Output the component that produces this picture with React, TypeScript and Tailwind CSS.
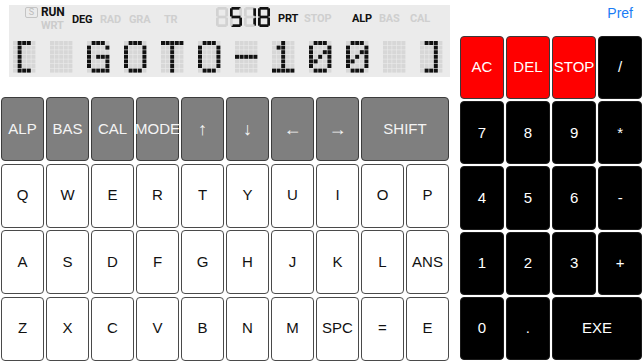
import React from 'react';

// 5x7 dot-matrix glyphs for the LCD line
const GLYPHS: Record<string, string[]> = {
  '[': ['01110', '01000', '01000', '01000', '01000', '01000', '01110'],
  ']': ['01110', '00010', '00010', '00010', '00010', '00010', '01110'],
  G: ['01110', '10001', '10000', '10111', '10001', '10001', '01111'],
  O: ['01110', '10001', '10001', '10001', '10001', '10001', '01110'],
  T: ['11111', '00100', '00100', '00100', '00100', '00100', '00100'],
  '-': ['00000', '00000', '00000', '11111', '00000', '00000', '00000'],
  '1': ['00100', '01100', '00100', '00100', '00100', '00100', '11111'],
  '0': ['01110', '10001', '10011', '10101', '11001', '10001', '01110'],
  ' ': ['00000', '00000', '00000', '00000', '00000', '00000', '00000'],
};

const LCD_TEXT = '[ GOTO-100 ]';

const SEGMENTS: Record<string, { x: number; y: number; w: number; h: number }> = {
  a: { x: 1.5, y: 0, w: 9, h: 2.7 },
  b: { x: 9.3, y: 1.3, w: 2.7, h: 8.1 },
  c: { x: 9.3, y: 10.6, w: 2.7, h: 8.1 },
  d: { x: 1.5, y: 17.3, w: 9, h: 2.7 },
  e: { x: 0, y: 10.6, w: 2.7, h: 8.1 },
  f: { x: 0, y: 1.3, w: 2.7, h: 8.1 },
  g: { x: 1.5, y: 8.65, w: 9, h: 2.7 },
};

const DIGITS = ['', 'afgcd', 'bc', 'abcdefg'];

const fnKeys = ['ALP', 'BAS', 'CAL', 'MODE', '↑', '↓', '←', '→'];
const letterRows = [
  ['Q', 'W', 'E', 'R', 'T', 'Y', 'U', 'I', 'O', 'P'],
  ['A', 'S', 'D', 'F', 'G', 'H', 'J', 'K', 'L', 'ANS'],
  ['Z', 'X', 'C', 'V', 'B', 'N', 'M', 'SPC', '=', 'E'],
];

const padKeys = [
  { label: 'AC', red: true },
  { label: 'DEL', red: true },
  { label: 'STOP', red: true },
  { label: '/' },
  { label: '7' },
  { label: '8' },
  { label: '9' },
  { label: '*' },
  { label: '4' },
  { label: '5' },
  { label: '6' },
  { label: '-' },
  { label: '1' },
  { label: '2' },
  { label: '3' },
  { label: '+' },
  { label: '0' },
  { label: '.' },
  { label: 'EXE', wide: true },
];

function DotChar({ ch }: { ch: string }) {
  const rows = GLYPHS[ch] ?? GLYPHS[' '];
  return (
    <svg width="22.5" height="32" viewBox="0 0 22.5 32" className="shrink-0" aria-hidden>
      {rows.flatMap((row, r) =>
        row.split('').map((on, c) => (
          <rect
            key={`${r}-${c}`}
            x={c * 4.6}
            y={r * 4.6}
            width="4"
            height="4"
            fill={on === '1' ? '#111111' : '#d7d7d7'}
          />
        ))
      )}
    </svg>
  );
}

function SegDigit({ on }: { on: string }) {
  return (
    <svg width="12" height="20" viewBox="0 0 12 20" className="shrink-0" aria-hidden>
      {Object.entries(SEGMENTS).map(([k, s]) => (
        <rect key={k} x={s.x} y={s.y} width={s.w} height={s.h} fill={on.includes(k) ? '#111111' : '#d2d2d2'} />
      ))}
    </svg>
  );
}

function Lcd() {
  const label = 'text-[11px] leading-[12px] font-bold font-[Roboto,sans-serif] tracking-[-0.2px]';
  return (
    <div className="ml-[9px] mt-[5px] w-[441px] h-[72px] bg-[#ebebeb] flex flex-col">
      <div className="h-[36px] flex items-start pl-[16px]">
        <div className="w-[16px] pt-[2px]">
          <div className="w-[13px] h-[11px] border border-[#c4c4c4] rounded-[2px] flex items-center justify-center text-[9px] leading-none text-[#bdbdbd] font-[Roboto,sans-serif]">
            S
          </div>
        </div>
        <div className={`w-[31px] flex flex-col pt-[1px] ${label}`}>
          <span className="text-[#111] text-[12px]">RUN</span>
          <span className="text-[#cccccc] mt-[2px]">WRT</span>
        </div>
        <span className={`w-[28px] pt-[9px] text-[#111] ${label}`}>DEG</span>
        <span className={`w-[29px] pt-[9px] text-[#cfcfcf] ${label}`}>RAD</span>
        <span className={`w-[35px] pt-[9px] text-[#cfcfcf] ${label}`}>GRA</span>
        <span className={`w-[52px] pt-[9px] text-[#cfcfcf] ${label}`}>TR</span>
        <div className="w-[62px] pt-[2px] flex gap-[2px]" role="img" aria-label="518">
          {DIGITS.map((d, i) => (
            <SegDigit key={i} on={d} />
          ))}
        </div>
        <span className={`w-[26px] pt-[8px] text-[#111] ${label}`}>PRT</span>
        <span className={`w-[48px] pt-[8px] text-[#cfcfcf] ${label}`}>STOP</span>
        <span className={`w-[27px] pt-[8px] text-[#111] ${label}`}>ALP</span>
        <span className={`w-[31px] pt-[8px] text-[#cfcfcf] ${label}`}>BAS</span>
        <span className={`pt-[8px] text-[#cfcfcf] ${label}`}>CAL</span>
      </div>
      <div className="flex pl-[4px] gap-[14.5px]" role="img" aria-label={LCD_TEXT}>
        {LCD_TEXT.split('').map((ch, i) => (
          <DotChar key={i} ch={ch} />
        ))}
      </div>
    </div>
  );
}

export default function App() {
  return (
    <div className="w-[643px] h-[362px] flex bg-white overflow-hidden font-['Liberation_Sans',Arial,sans-serif]">
      <div className="w-[450px] flex flex-col">
        <Lcd />
        <div className="mt-[20px] ml-[1px] grid grid-cols-[repeat(10,43px)] grid-rows-[repeat(4,64px)] gap-x-[2px] gap-y-[2.5px]">
          {fnKeys.map((k, i) => (
            <div
              key={k}
              className={`bg-[#7f7f7f] border-[1.5px] border-[#3c3c3c] rounded-[4px] flex items-center justify-center ${
                i >= 4 ? 'text-[18px]' : 'text-[15px]'
              } text-[#f4f4f4] whitespace-nowrap`}
            >
              {k}
            </div>
          ))}
          <div className="col-span-2 bg-[#7f7f7f] border-[1.5px] border-[#3c3c3c] rounded-[4px] flex items-center justify-center text-[15px] text-[#f4f4f4]">
            SHIFT
          </div>
          {letterRows.flat().map((k, i) => (
            <div
              key={i}
              className="bg-white border-[1.5px] border-[#4a4a4a] rounded-[4px] flex items-center justify-center text-[15px] text-[#111]"
            >
              {k}
            </div>
          ))}
        </div>
      </div>

      <div className="ml-[10px] w-[182px] flex flex-col">
        <div className="h-[36px] flex justify-end pr-[9px] pt-[5px] text-[14px] leading-[16px] text-[#1a7cf5]">Pref</div>
        <div className="grid grid-cols-4 grid-rows-[repeat(5,63.2px)] gap-x-[2.5px] gap-y-[2px]">
          {padKeys.map((k) => (
            <div
              key={k.label}
              className={`${k.red ? 'bg-[#ff0000] border-[#3a3a3a]' : 'bg-black border-[#1a1a1a]'} ${
                k.wide ? 'col-span-2' : ''
              } border rounded-[4px] flex items-center justify-center text-[15px] text-white whitespace-nowrap`}
            >
              {k.label}
            </div>
          ))}
        </div>
      </div>
    </div>
  );
}
